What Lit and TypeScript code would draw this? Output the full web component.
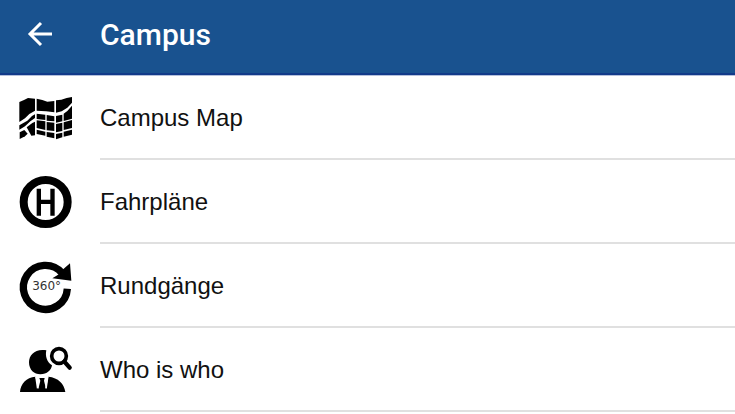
import { LitElement, html, css, svg } from "lit";
import { customElement } from "lit/decorators.js";

const map = svg`
  <path d="M28 48L42 42L54 36L75 38V74L58 84L45 97L28 108Z"/>
  <path d="M80 38L97 42L112 47L133 45V79L108 76L80 74Z"/>
  <path d="M138 43L154 41L170 36L186 33V50L172 65L155 76L138 80Z"/>
  <path d="M28 118L52 104L66 90L75 85V96L61 106L45 121L28 131Z"/>
  <path d="M29 139L43 132L53 143L45 151L29 159Z"/>
  <path d="M50 124L67 111L75 107V148L64 149Z"/>
  <path d="M80 83L106 86V102L80 99Z"/><path d="M110 87L133 91V106L110 104Z"/>
  <path d="M80 103L106 106V132L80 126Z"/><path d="M110 108L133 110V135L110 133Z"/>
  <path d="M80 131L106 137V149L80 144Z"/><path d="M110 138L133 141V157L110 152Z"/>
  <path d="M138 90L157 86V106L138 110Z"/><path d="M161 83L172 75L186 59V98L161 105Z"/>
  <path d="M138 114L157 110V135L138 139Z"/><path d="M161 109L186 102V126L161 132Z"/>
  <path d="M138 144L157 140V154L138 160Z"/><path d="M161 137L186 131V146L161 152Z"/>`;

const stop = svg`
  <circle cx="107" cy="96" r="66" fill="none" stroke="#000" stroke-width="24"/>
  <path d="M80 56H93V89H121V56H134V137H121V102H93V137H80Z"/>`;

const tour = svg`
  <path d="M156 57A66 66 0 1 0 172 104" fill="none" stroke="#000" stroke-width="22"/>
  <path d="M127 73L148 60L150 54L180 28L184 80Z"/>
  <text x="110" y="109" text-anchor="middle">360°</text>`;

const person = svg`
  <path d="M109 37C76 31 57 50 57 73C57 96 73 109 91 109C111 109 124 96 126 82C111 73 105 54 109 37Z"/>
  <path d="M30 162C32 136 49 119 76 116L85 153L91 128L88 120H104L102 128L108 153L115 116C145 119 162 137 166 162Z"/>
  <circle cx="147" cy="54" r="22" fill="none" stroke="#000" stroke-width="11"/>
  <path d="M163 71L179 89" stroke="#000" stroke-width="13" stroke-linecap="round"/>
  <path d="M78 117L83 151M113 117L108 151" stroke="#fff" stroke-width="5"/>`;

const entries = [
  { label: "Campus Map", icon: map },
  { label: "Fahrpläne", icon: stop },
  { label: "Rundgänge", icon: tour },
  { label: "Who is who", icon: person },
];

@customElement("app-root")
export class AppRoot extends LitElement {
  static styles = css`
    :host {
      display: block;
      background: #fff;
      color: #111;
      font-family: "Liberation Sans", Arial, sans-serif;
    }
    .bar {
      display: flex;
      align-items: center;
      box-sizing: border-box;
      height: 76px;
      padding: 0 20px 8px;
      gap: 40px;
      background: #19528f;
      border-bottom: 1px solid #b5c0dc;
      box-shadow: inset 0 -2px #123a89;
      color: #fff;
    }
    .back {
      display: flex;
      align-items: center;
      justify-content: center;
      width: 40px;
      height: 40px;
      padding: 0;
      border: 0;
      background: none;
      color: inherit;
    }
    .arrow { width: 26px; height: 26px; flex: none; }
    .title {
      margin: 0;
      padding-top: 2px;
      font: 500 30px/36px Roboto, sans-serif;
    }
    .list { margin: 0; padding: 0; list-style: none; }
    .row {
      display: flex;
      align-items: center;
      height: 84px;
      padding-left: 10px;
      gap: 18px;
      color: inherit;
      text-decoration: none;
    }
    .icon { width: 72px; height: 64px; flex: none; }
    .icon text { font: 36px "DejaVu Sans", sans-serif; fill: #333; }
    .label {
      display: flex;
      align-items: center;
      flex: 1;
      box-sizing: border-box;
      height: 100%;
      padding-top: 2px;
      border-bottom: 2px solid #e0e0e0;
      font-size: 24px;
      line-height: 28px;
    }
  `;

  render() {
    return html`
      <header class="bar">
        <button class="back" aria-label="Zurück">
          <svg class="arrow" viewBox="0 0 26 26" fill="none" stroke="currentColor" stroke-width="3" aria-hidden="true">
            <path d="M14 2L3 13L14 24M3 13H25" />
          </svg>
        </button>
        <h1 class="title">Campus</h1>
      </header>
      <nav>
        <ul class="list">
          ${entries.map(
            (e) => html`<li>
              <a class="row" href="#">
                <svg class="icon" viewBox="0 0 216 192" aria-hidden="true">${e.icon}</svg>
                <span class="label">${e.label}</span>
              </a>
            </li>`
          )}
        </ul>
      </nav>
    `;
  }
}
